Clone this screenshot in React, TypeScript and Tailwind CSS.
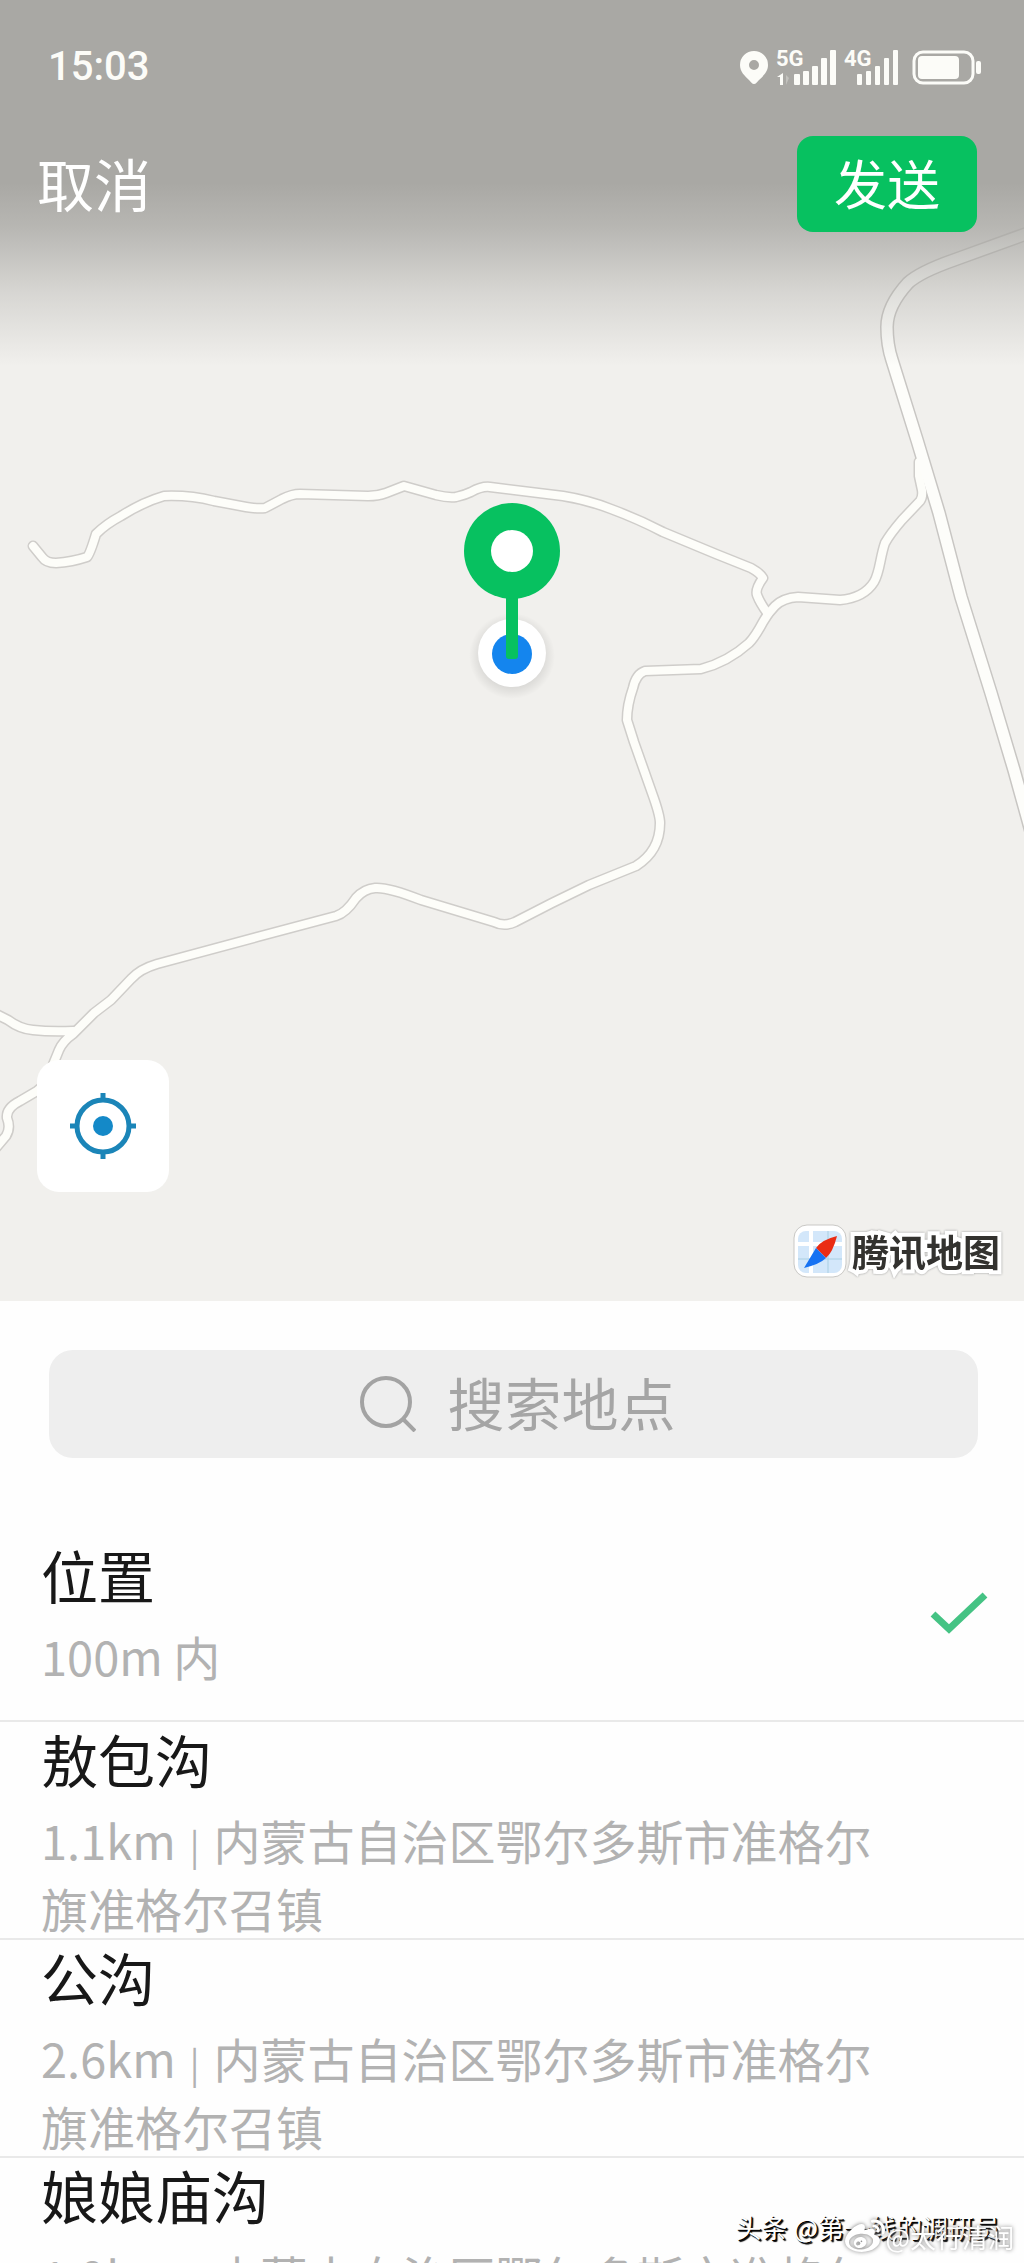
import { useState } from "react";
import { FaWeibo } from "react-icons/fa";

const address = "内蒙古自治区鄂尔多斯市准格尔旗准格尔召镇";

const places = [
  { name: "位置", detail: "100m 内" },
  { name: "敖包沟", detail: "1.1km", address },
  { name: "公沟", detail: "2.6km", address },
  { name: "娘娘庙沟", detail: "1.9km", address },
];

const highway =
  "M1034 231 L954 260 Q920 272 908 283 Q887 306 887 327 Q887 345 892 360 L917 440 L939 513 L961 597 L991 693 L1014 770 L1034 842";

const roads = [
  "M33 546 L42 557 Q46 563 56 563 Q72 562 87 557 Q90 554 96 534 Q106 524 121 516 Q143 502 164 496 Q190 495 214 501 L246 507 Q258 509 265 508 L282 499 Q292 494 300 494 L368 496 Q378 496 386 493 L404 486 L436 495 Q448 498 456 497 Q465 495 471 492 Q482 486 490 487 L563 496 Q588 500 611 509 Q638 519 663 532 L716 554 L751 568 Q760 573 763 578 Q755 589 757 595 Q760 603 768 614",
  "M919 462 L919 476 L922 490 Q923 497 920 501 L902 520 Q890 534 885 543 C880 557 880 572 874 582 Q864 598 840 600 L798 597 Q783 598 775 606 Q768 613 763 622 Q755 637 749 643 Q728 662 701 669 L645 671 Q636 674 633 688 Q627 705 627 720 L634 742 L652 793 Q660 815 660 823 Q660 851 636 866 L589 885 L552 903 L515 922 Q504 927 494 922 L421 900 Q388 887 375 888 Q364 889 356 898 Q346 913 336 916 L257 937 L157 964 Q140 969 131 979 L111 1000 L94 1013 L73 1034 Q63 1041 59 1050 L50 1072 Q45 1085 37 1091 L20 1101 Q6 1108 7 1118 Q11 1128 6 1136 L-6 1150",
  "M-8 1012 L8 1020 Q20 1029 33 1030 Q50 1032 73 1031",
];

const barTops = [73, 70, 65, 57, 49];

const Signals = () => (
  <svg
    viewBox="776 46 124 40"
    className="h-10 w-[124px] font-[Roboto,sans-serif] text-[22px] font-bold"
    fill="#fcfcf8"
    aria-hidden="true"
  >
    <text x="776" y="65">
      5G
    </text>
    <path d="M777 76l6-4v12h-3v-8h-3z" />
    <path d="M786 74l3 3-3 7z" opacity="0.3" />
    {barTops.map((top, i) => (
      <rect key={top} x={794 + i * 9} y={top} width="6" height={84 - top} rx="1" />
    ))}
    <text x="844" y="65">
      4G
    </text>
    {barTops.map((top, i) => (
      <rect key={top} x={857 + i * 9} y={top} width="5" height={84 - top} rx="1" />
    ))}
  </svg>
);

const StatusBar = () => (
  <div className="flex items-center justify-between pt-[45px] pr-[41px] pl-[48px] text-[#fcfcf8]">
    <span className="font-[Roboto,sans-serif] text-[40px] leading-[44px] font-medium">15:03</span>
    <div className="flex items-center">
      <svg viewBox="0 0 30 40" className="mr-[7px] h-10 w-[30px]" fill="currentColor" aria-hidden="true">
        <path
          fillRule="evenodd"
          d="M15 4a14 14 0 0 0-14 14c0 7 5 11 9 15 2 2 3 4 5 4s3-2 5-4c4-4 9-8 9-15A14 14 0 0 0 15 4zm0 9a5 5 0 1 1 0 10 5 5 0 0 1 0-10z"
        />
      </svg>
      <Signals />
      <svg viewBox="0 0 72 40" className="ml-[11px] h-10 w-[72px]" fill="none" aria-hidden="true">
        <rect x="3" y="5" width="59" height="31" rx="9" stroke="#fcfcf8" strokeWidth="3" />
        <rect x="7" y="9" width="41" height="23" rx="4" fill="#fcfcf8" />
        <rect x="65" y="14" width="5" height="13" rx="2" fill="#fcfcf8" />
      </svg>
    </div>
  </div>
);

const MapCanvas = () => (
  <svg viewBox="0 0 1024 1301" className="absolute inset-0 h-full w-full" aria-hidden="true">
    <defs>
      <linearGradient id="shade" x1="0" y1="0" x2="0" y2="1">
        <stop offset="0" stopColor="#a9a8a4" />
        <stop offset="0.5" stopColor="#a9a8a4" />
        <stop offset="0.62" stopColor="#a9a8a4" stopOpacity="0.8" />
        <stop offset="0.8" stopColor="#a9a8a4" stopOpacity="0.36" />
        <stop offset="1" stopColor="#a9a8a4" stopOpacity="0" />
      </linearGradient>
      <radialGradient id="halo">
        <stop offset="0.7" stopColor="#000" stopOpacity="0.1" />
        <stop offset="1" stopColor="#000" stopOpacity="0" />
      </radialGradient>
    </defs>
    <rect width="1024" height="1301" fill="#f1f0ed" />
    <g fill="none" strokeLinecap="round" strokeLinejoin="round">
      {roads.map((d) => (
        <path key={d} d={d} stroke="#cfcdca" strokeWidth="11" />
      ))}
      <path d={highway} stroke="#c8c6c3" strokeWidth="14" />
      {roads.map((d) => (
        <path key={d} d={d} stroke="#fdfdf9" strokeWidth="8" />
      ))}
      <path d={highway} stroke="#fdfdfa" strokeWidth="11" />
    </g>
    <rect width="1024" height="366" fill="url(#shade)" />
    <circle cx="512" cy="656" r="43" fill="url(#halo)" />
    <circle cx="512" cy="653" r="34" fill="#fff" />
    <circle cx="512" cy="654" r="20" fill="#1485ee" />
    <rect x="506" y="590" width="12" height="69" rx="3" fill="#07c160" />
    <circle cx="512" cy="551" r="48" fill="#07c160" />
    <circle cx="512" cy="551" r="21" fill="#fff" />
  </svg>
);

const MapLogo = () => (
  <div className="flex items-center gap-[5px]">
    <svg viewBox="0 0 54 54" className="size-[54px]" aria-hidden="true">
      <rect x="1" y="1" width="52" height="52" rx="13" fill="#fff" stroke="#c9c8c5" strokeWidth="1" />
      <rect x="5" y="7" width="44" height="42" rx="8" fill="#d3e7fa" />
      <path d="M5 20h44M18 7v42" stroke="#fff" strokeWidth="4" />
      <path d="M5 35h44M35 7v42" stroke="#a9cfe2" strokeWidth="1" />
      <path d="M44 12Q28 16 23 24l10 10Q40 28 44 12z" fill="#ea2c14" />
      <path d="M11 44L23 24l10 10Q27 40 11 44z" fill="#1672f3" />
    </svg>
    <span className="text-[37px] leading-[54px] font-bold text-[#33322f] [-webkit-text-stroke:8px_#fff] [paint-order:stroke_fill] drop-shadow-[0_0_1px_#999]">
      腾讯地图
    </span>
  </div>
);

const App = () => {
  const [selected, setSelected] = useState("位置");

  return (
    <main className="relative h-screen overflow-hidden bg-[#fefefe] font-['Noto_Sans_CJK_SC',sans-serif]">
      <section className="relative flex aspect-[1024/1301] w-full flex-col">
        <MapCanvas />
        <div className="relative flex flex-1 flex-col">
          <StatusBar />
          <div className="flex items-center justify-between pt-[47px] pr-[47px] pl-[37px] text-white">
            <button type="button" className="pb-1 text-[57px] leading-[80px]">
              取消
            </button>
            <button type="button" className="h-24 rounded-2xl bg-[#07c160] px-[37px] pb-1 text-[53px] leading-[80px]">
              发送
            </button>
          </div>
          <div className="mt-auto pl-[37px]">
            <button
              type="button"
              aria-label="定位"
              className="flex size-[132px] items-center justify-center rounded-[22px] bg-white"
            >
              <svg viewBox="0 0 68 68" className="size-[68px]" fill="none" stroke="#1b85b8" strokeWidth="5" aria-hidden="true">
                <circle cx="34" cy="34" r="26" />
                <circle cx="34" cy="34" r="10" fill="#1489c8" stroke="none" />
                <path d="M34 1v7M34 60v7M1 34h7M60 34h7" />
              </svg>
            </button>
          </div>
          <div className="flex justify-end pt-8 pr-[24px] pb-[23px]">
            <MapLogo />
          </div>
        </div>
      </section>

      <section>
        <div className="pt-[49px] pr-[46px] pb-20 pl-[49px]">
          <label className="flex h-[108px] items-center justify-center gap-8 rounded-[24px] bg-[#eeeeee] pl-3">
            <svg viewBox="0 0 56 56" className="size-14" fill="none" stroke="#a3a3a3" strokeWidth="4" aria-hidden="true">
              <circle cx="26" cy="26" r="24" />
              <path d="M43 43l12 12" />
            </svg>
            <input
              type="text"
              aria-label="搜索地点"
              placeholder="搜索地点"
              className="h-24 w-[232px] bg-transparent pb-1.5 text-[57px] outline-none placeholder:text-[#a5a5a5]"
            />
          </label>
        </div>

        <ul>
          {places.map((place) => (
            <li key={place.name} className="border-b-2 border-[#e9e9e9] first:*:pb-[34px]">
              <button
                type="button"
                aria-pressed={selected === place.name}
                onClick={() => setSelected(place.name)}
                className="flex w-full items-center gap-10 pr-9 pl-[41px] text-left"
              >
                <span className="flex-1">
                  <span className="block text-[57px] leading-[72px] text-[#181818]">{place.name}</span>
                  <span className="mt-3 -mb-1 block text-[47px] leading-[68px] text-[#b2b2b2]">
                    {place.detail}
                    {place.address && <span className="mx-[14px] text-[36px] leading-none">|</span>}
                    {place.address}
                  </span>
                </span>
                <span className="w-[58px]">
                  {selected === place.name && (
                    <svg viewBox="0 0 58 44" className="w-full" fill="none" stroke="#45c384" strokeWidth="7" aria-hidden="true">
                      <path d="M3 24l16 15L55 5" />
                    </svg>
                  )}
                </span>
              </button>
            </li>
          ))}
        </ul>
      </section>

      <p className="absolute right-[24px] bottom-[18px] text-[26px] leading-9 text-white [text-shadow:1px_1px_0_#000,2px_2px_1px_#000]">
        头条 @第一线的调研员
      </p>
      <p className="absolute right-[10px] bottom-[6px] flex items-center text-[26px] leading-9 text-white drop-shadow-[0_0_2px_#777]">
        <FaWeibo className="size-10" aria-hidden="true" />
        @太行清润
      </p>
    </main>
  );
};

export default App;
